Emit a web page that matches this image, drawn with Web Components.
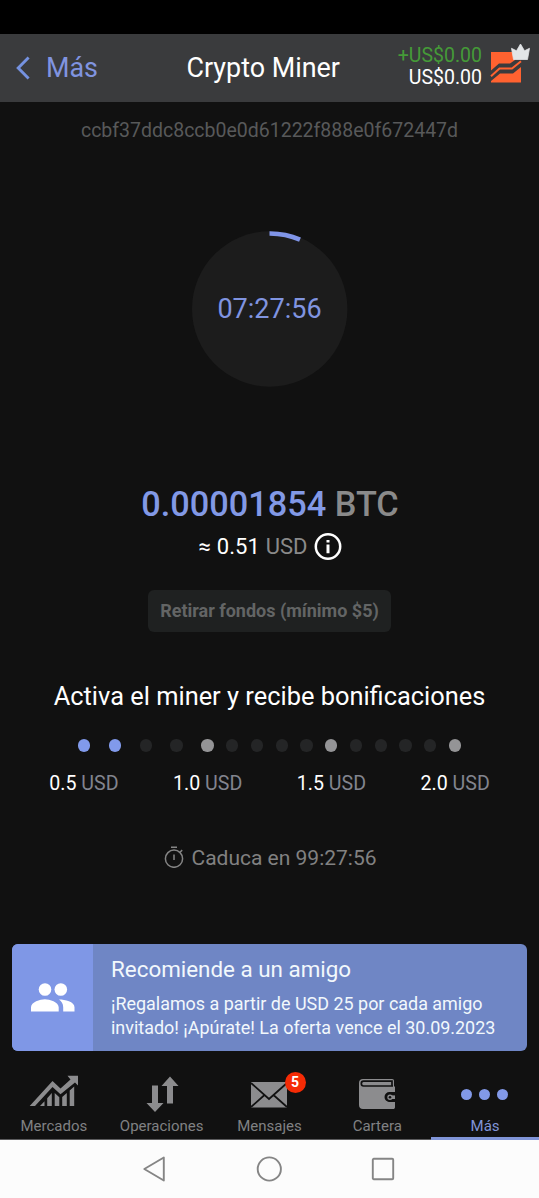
<!DOCTYPE html>
<html lang="es">
<head>
<meta charset="utf-8">
<title>Crypto Miner</title>
<style>
html,body{margin:0;height:100%;background:#111;overflow:hidden}
body{font-family:Roboto,"Liberation Sans",sans-serif}
</style>
</head>
<body>
<miner-app></miner-app>
<script>
const define = (name, html) => {
  const t = document.createElement('template');
  t.innerHTML = html;
  customElements.define(name, class extends HTMLElement {
    constructor() {
      super();
      this.attachShadow({mode: 'open'}).append(t.content.cloneNode(true));
    }
  });
};

define('app-header', `
<style>
:host{display:grid;grid-template-columns:186.500px 1fr auto;align-items:center;height:68px;background:#3a3b3d;color:#fff;font-size:26.900px;line-height:32px;white-space:nowrap}
.back{display:flex;align-items:center;color:#8094e0;padding-left:16px;gap:16px}
.right{display:flex;justify-content:flex-end;align-items:center;padding-right:9px;gap:8px}
.money{font-size:19.5px;line-height:22px;text-align:right;margin-top:-3px}
.up{color:#459a38}
svg{display:block;flex:none}
.logo{margin-top:-11px}
</style>
<div class="back"><svg width="14" height="24" viewBox="0 0 14 24" fill="none" stroke="#7592e0" stroke-width="2.9"><path d="M12.6 1.5 2.2 12l10.4 10.5"/></svg><slot name="back"></slot></div>
<div><slot name="title"></slot></div>
<div class="right"><div class="money"><div class="up"><slot name="gain"></slot></div><div><slot name="balance"></slot></div></div>
<svg class="logo" width="40" height="40" viewBox="0 0 40 40"><path fill="#ff6230" d="M1 9h24v8l-5 3.500H9l-8 7zM1 39.500V38l9-7.500h13l8-6.500v15.500z"/><path d="m1 33.200 8.500-7.700H22l9-7.300" fill="none" stroke="#ff6230" stroke-width="2"/><path fill="#e2e5e7" stroke="#e2e5e7" stroke-width=".8" stroke-linejoin="round" d="m21.500 5.300 5 2.500L30.500 1l4 6.800 5-2.500L37.500 16.500h-14z"/></svg></div>`);

define('countdown-ring', `
<style>
:host{display:grid;width:156px;height:156px;place-items:center;color:#8094e0;font-size:27px;line-height:32px}
svg,span{grid-area:1/1}
</style>
<svg width="156" height="156" viewBox="0 0 156 156"><circle cx="77.700" cy="78" r="77.700" fill="#1c1c1c"/><path d="M77.500 2.500A75.500 75.500 0 0 1 108 8.700" fill="none" stroke="#8095e8" stroke-width="4.600"/></svg>
<span><slot></slot></span>`);

define('btc-balance', `
<style>
:host{display:block;text-align:center;white-space:nowrap}
.btc{font-size:34.300px;line-height:42px;font-weight:500;color:#8299e6;padding-left:1px}
i{font-style:normal;color:#8a8a8a}
.usd{display:flex;justify-content:center;align-items:center;font-size:22px;line-height:28px;color:#fff;margin-top:8px;gap:6px;padding-left:1px}
svg{display:block}
button{display:block;margin:29px auto 0;width:243px;height:42px;border:0;border-radius:6px;background:#1f2121;color:#636565;font:700 18px/42px Roboto,sans-serif;padding:0}
</style>
<div class="btc"><slot name="amount"></slot> <i>BTC</i></div>
<div class="usd"><span>≈</span><span><slot name="fiat"></slot></span><i>USD</i><svg width="28" height="28" viewBox="0 0 28 28"><circle cx="14" cy="13.500" r="12.200" fill="none" stroke="#fff" stroke-width="2.500"/><path fill="#fff" d="M12.500 7h3v2.600h-3zM12.500 11.500h3v8.700h-3z"/></svg></div>
<button><slot name="action"></slot></button>`);

define('bonus-track', `
<style>
:host{display:block}
.dots{display:flex;height:13px;align-items:center;padding-left:22px}
.a{flex:none;width:30.900px;display:grid;place-items:center}
.b{flex:none;width:24.750px;display:grid;place-items:center}
.a::before,.b::before{content:"";width:12.400px;height:12.400px;border-radius:50%;background:#242526}
.on::before{background:#819aeb}.goal::before{background:#949496}
.first{margin-left:46.500px}
.mid{margin-left:3.100px}
.labels{display:grid;grid-template-columns:repeat(4,123.750px);padding-left:22px;margin-top:19px;text-align:center;font-size:19.600px;line-height:26px;color:#fff;white-space:nowrap}
i{font-style:normal;color:#82848e}
</style>
<div class="dots"><div class="a on first"></div><div class="a on"></div><div class="a"></div><div class="a"></div><div class="b goal mid"></div><div class="b"></div><div class="b"></div><div class="b"></div><div class="b"></div><div class="b goal"></div><div class="b"></div><div class="b"></div><div class="b"></div><div class="b"></div><div class="b goal"></div></div>
<div class="labels"><div>0.5 <i>USD</i></div><div>1.0 <i>USD</i></div><div>1.5 <i>USD</i></div><div>2.0 <i>USD</i></div></div>`);

define('expiry-note', `
<style>
:host{display:flex;justify-content:center;align-items:center;gap:7.500px;color:#818181;font-size:21px;line-height:26px;white-space:nowrap;padding-left:1.500px}
svg{display:block;margin-top:-2px}
</style>
<svg width="20" height="22" viewBox="0 0 20 22" fill="none" stroke="#858585" stroke-width="1.500"><circle cx="10" cy="12.700" r="8.600"/><path d="M7 1.200h6M10 8.500v5.500M16 6.300l2.200-2.200"/></svg><span><slot></slot></span>`);

define('referral-banner', `
<style>
:host{display:flex;height:108px;margin:0 12px;border-radius:6px;overflow:hidden;background:#6f86c5;color:#f2f8fc;white-space:nowrap}
.icon{width:81px;background:#7f97e6;display:grid;place-items:center;flex:none}
.text{padding:10px 0 0 18px}
h2{margin:0;font-weight:400;font-size:22.400px;line-height:30px}
p{margin:8px 0 0;font-size:17.950px;line-height:24px}
svg{display:block}
</style>
<div class="icon"><svg width="44" height="29" viewBox="0 0 44 29" fill="#fff"><circle cx="14" cy="6.500" r="6.300"/><circle cx="29.800" cy="6.500" r="6.300"/><path d="M0 28.500v-4.200c0-5.200 9.200-8 13.900-8s13.800 2.800 13.800 8v4.200zM28 16.500c6 0 15.500 2.200 15.500 7.800v4.200H32.200v-4.200c0-3.600-1.700-6-4.200-7.800z"/></svg></div>
<div class="text"><h2><slot name="title"></slot></h2><p><slot name="body"></slot></p></div>`);

define('tab-item', `
<style>
:host{position:relative;box-sizing:border-box;display:flex;flex-direction:column;align-items:center;color:#808183;font-size:15px;line-height:18px;border-bottom:1px solid #5b5b5d;height:89px;white-space:nowrap}
:host([active]){color:#8094d8;border-bottom:3px solid #8095d8}
.icon{height:42px;margin-top:22px;display:grid;place-items:center;color:#8c8c8e}
:host([active]) .icon{color:#8299e8}
.label{margin-top:1.500px}
::slotted(svg){display:block}
</style>
<div class="icon"><slot name="icon"></slot></div><div class="label"><slot></slot></div><slot name="badge"></slot>`);

define('count-badge', `
<style>
:host{position:absolute;left:69px;top:20.500px;width:21px;height:21px;border-radius:50%;background:#f52b05;color:#fff;font-size:14px;line-height:21px;font-weight:700;text-align:center}
</style><slot></slot>`);

define('tab-bar', `
<style>
:host{display:grid;grid-template-columns:repeat(5,1fr);height:89px;background:#111}
svg{display:block}
</style>
<tab-item><svg slot="icon" width="50" height="32" viewBox="0 0 50 32" fill="currentColor" style="margin-bottom:6px"><path d="M.700 31 23.500 6l8 7.500 10-9L38.500.800H49v9.700l-3-3L31.500 19.300l-8-7.300L6 31z"/><path d="m11 31 4.500-4.800V31zM18.200 23.300l4.600-5.300v13h-4.600zM25.700 18l4.600 4.300V31h-4.600zM33.200 22l4.600-4v13h-4.600zM40.700 15.600l4.500-4V31h-4.500z"/></svg>Mercados</tab-item>
<tab-item><svg slot="icon" width="34" height="38" viewBox="0 0 34 38" fill="currentColor" style="margin-left:1px"><path d="M7 10.500h6V28h5.500L10 37 1.500 28H7zM22 28.500h6V11h5.500L25 1.500 16.500 11H22z"/></svg>Operaciones</tab-item>
<tab-item><svg slot="icon" width="36" height="30" viewBox="0 0 36 30" style="margin-top:1px"><path fill="currentColor" d="M0 2h36v25.500H0z"/><path d="m0 3 18 16L36 3M0 27l13.500-12M36 27 22.500 15" fill="none" stroke="#111" stroke-width="1.700"/></svg>Mensajes<count-badge slot="badge">5</count-badge></tab-item>
<tab-item><svg slot="icon" width="36" height="32" viewBox="0 0 36 32"><path fill="currentColor" d="M4 1h29c1.500 0 2 .7 2 2v5.500h1V14h-5.500a4.500 4.500 0 0 0 0 10H36v5c0 1.500-.7 2-2 2H4c-2.500 0-4-1.500-4-4V5c0-2.500 1.500-4 4-4z"/><path d="M34 8H4.500C1.600 8 1.600 3.200 4.500 3.200H33V8" fill="none" stroke="#111" stroke-width="1.700"/><circle cx="31" cy="19.200" r="3.600" fill="currentColor" stroke="#111" stroke-width="1.800"/><path fill="currentColor" d="M32 17.400h4v3.600h-4z"/><circle cx="31" cy="19.200" r="1.300" fill="#111"/></svg>Cartera</tab-item>
<tab-item active><svg slot="icon" width="54" height="12" viewBox="0 0 54 12" fill="currentColor" style="margin-left:5px"><circle cx="5.500" cy="6.500" r="5.500"/><circle cx="23.500" cy="6.500" r="5.500"/><circle cx="41.500" cy="6.500" r="5.500"/></svg>Más</tab-item>`);

define('system-nav', `
<style>
:host{display:flex;height:58px;background:#fcfcfc;align-items:center;padding-left:142px;box-sizing:border-box}
svg{display:block;fill:none;stroke:#858585;stroke-width:1.900;stroke-linejoin:round;margin-top:-1px}
.home{margin-left:90px}
.recent{margin-left:89px}
</style>
<svg width="24" height="26" viewBox="0 0 24 26"><path d="M21.800 1.500v23L2.300 13z"/></svg>
<svg class="home" width="26" height="26" viewBox="0 0 26 26"><circle cx="13.300" cy="13" r="11.600"/></svg>
<svg class="recent" width="24" height="24" viewBox="0 0 24 24"><rect x="1.800" y="1.800" width="20.400" height="20.400" rx="1"/></svg>`);

define('miner-app', `
<style>
:host{display:flex;flex-direction:column;width:539px;height:1198px;background:#111}
.status{height:34px;background:#000;flex:none}
main{flex:1;display:flex;flex-direction:column;min-height:0;white-space:nowrap}
.hash{text-align:center;color:#58595a;font-size:19.500px;line-height:26px;margin-top:15.500px}
countdown-ring{align-self:center;margin-top:87.500px}
btc-balance{margin-top:96px}
h1{margin:49px 0 0;text-align:center;font-weight:400;font-size:25.400px;line-height:30px;color:#fff}
bonus-track{margin-top:28px}
expiry-note{margin-top:48px}
referral-banner{margin-top:72.500px}
app-header,tab-bar,system-nav{flex:none}
</style>
<div class="status"></div>
<app-header><span slot="back">Más</span><span slot="title">Crypto Miner</span><span slot="gain">+US$0.00</span><span slot="balance">US$0.00</span></app-header>
<main>
<div class="hash">ccbf37ddc8ccb0e0d61222f888e0f672447d</div>
<countdown-ring>07:27:56</countdown-ring>
<btc-balance><span slot="amount">0.00001854</span><span slot="fiat">0.51</span><span slot="action">Retirar fondos (mínimo $5)</span></btc-balance>
<h1>Activa el miner y recibe bonificaciones</h1>
<bonus-track></bonus-track>
<expiry-note>Caduca en 99:27:56</expiry-note>
<referral-banner><span slot="title">Recomiende a un amigo</span><span slot="body">¡Regalamos a partir de USD 25 por cada amigo<br>invitado! ¡Apúrate! La oferta vence el 30.09.2023</span></referral-banner>
</main>
<tab-bar></tab-bar>
<system-nav></system-nav>`);
</script>
</body>
</html>
